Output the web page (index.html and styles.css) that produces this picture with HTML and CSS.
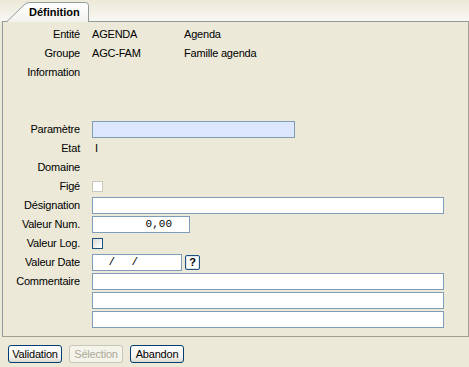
FILE: index.html
```html
<!DOCTYPE html>
<html lang="fr">
<head>
  <meta charset="UTF-8">
  <title>Définition</title>
  <link rel="stylesheet" href="styles.css">
</head>
<body>
  <div class="tabs">
    <div class="tab">
      <svg class="tab-shape" width="82" height="21" viewBox="0 0 82 21">
        <defs>
          <linearGradient id="tabfill" x1="0" y1="0" x2="0" y2="1">
            <stop offset="0" stop-color="#ffffff"/>
            <stop offset="1" stop-color="#f3f2ec"/>
          </linearGradient>
        </defs>
        <path d="M0,21 L0.5,20.5 L17,4 Q19.5,1.5 23,1.5 L78.5,1.5 Q81.5,1.5 81.5,4.5 L81.5,21 Z" fill="url(#tabfill)" stroke="none"/>
        <path d="M0,20.5 L17,4 Q19.5,1.5 23,1.5 L78.5,1.5 Q81.5,1.5 81.5,4.5 L81.5,21" fill="none" stroke="#919b9c"/>
      </svg>
      <span class="tab-label">Définition</span>
    </div>
  </div>

  <div class="panel">
    <div class="form">
      <div class="lbl">Entité</div>
      <div class="val"><span class="code">AGENDA</span><span>Agenda</span></div>

      <div class="lbl">Groupe</div>
      <div class="val"><span class="code">AGC-FAM</span><span>Famille agenda</span></div>

      <div class="lbl">Information</div>
      <div class="val"></div>

      <div class="blank"></div>

      <div class="lbl">Paramètre</div>
      <div class="val"><div class="field field-focus w-param"></div></div>

      <div class="lbl">Etat</div>
      <div class="val"><span class="etat">I</span></div>

      <div class="lbl">Domaine</div>
      <div class="val"></div>

      <div class="lbl">Figé</div>
      <div class="val"><span class="check check-off"></span></div>

      <div class="lbl">Désignation</div>
      <div class="val"><div class="field w-full"></div></div>

      <div class="lbl">Valeur Num.</div>
      <div class="val"><div class="field w-num mono num">0,00</div></div>

      <div class="lbl">Valeur Log.</div>
      <div class="val"><span class="check"></span></div>

      <div class="lbl">Valeur Date</div>
      <div class="val"><div class="field w-date mono date">  /  /</div><span class="help">?</span></div>

      <div class="lbl">Commentaire</div>
      <div class="val"><div class="field w-full"></div></div>
      <div class="lbl"></div>
      <div class="val"><div class="field w-full"></div></div>
      <div class="lbl"></div>
      <div class="val"><div class="field w-full"></div></div>
    </div>
  </div>

  <div class="actions">
    <button class="btn">Validation</button>
    <button class="btn" disabled>Sélection</button>
    <button class="btn">Abandon</button>
  </div>
</body>
</html>
```

FILE: styles.css
```css
body {
  margin: 0;
  background-color: #ece9d8;
  font-family: "Liberation Sans", Arial, sans-serif;
  font-size: 11px;
  letter-spacing: -0.2px;
  color: #000;
}
.tabs {
  height: 21px;
  background: linear-gradient(#ece9d8, #f8f7f2);
  display: flex;
  align-items: flex-end;
}
.tab {
  position: relative;
  z-index: 1;
  width: 82px;
  height: 21px;
  margin-left: 7px;
  margin-bottom: -1px;
  box-sizing: border-box;
  padding-left: 22px;
  padding-top: 2px;
  line-height: 19px;
}
.tab-shape {
  position: absolute;
  left: 0;
  top: 0;
}
.tab-label {
  position: relative;
  font-weight: bold;
  letter-spacing: 0;
}
.panel {
  margin-left: 2px;
  width: 467px;
  box-sizing: border-box;
  border: 1px solid #919b9c;
  border-right-color: #a19f93;
  border-bottom-color: #a19f93;
  padding: 4px 0 6px 0;
}
.form {
  display: grid;
  grid-template-columns: 77px 1fr;
  column-gap: 12px;
  grid-auto-rows: 19px;
}
.lbl {
  text-align: right;
  line-height: 17px;
  white-space: nowrap;
}
.val {
  display: flex;
  align-items: flex-start;
  line-height: 17px;
}
.code {
  width: 92px;
}
.blank {
  grid-column: 1 / -1;
  grid-row: span 2;
}
.etat {
  padding-left: 3px;
}
.field {
  height: 17px;
  box-sizing: border-box;
  border: 1px solid #7f9db9;
  background-color: #fff;
}
.field-focus {
  background-color: #dce6ff;
}
.w-param {
  width: 203px;
}
.w-full {
  width: 352px;
}
.w-num {
  width: 98px;
}
.w-date {
  width: 90px;
}
.mono {
  font-family: "Liberation Mono", "Courier New", monospace;
  font-size: 11px;
  letter-spacing: 0;
  line-height: 15px;
  white-space: pre;
}
.num {
  text-align: right;
  padding-right: 17px;
}
.date {
  padding-left: 0;
  letter-spacing: 1.1px;
}
.check {
  width: 11px;
  height: 11px;
  box-sizing: border-box;
  margin-top: 3px;
  border: 1px solid #1c5180;
  background: linear-gradient(135deg, #dcdcd7, #ffffff);
}
.check-off {
  border-color: #cac8bb;
  background: #fff;
}
.help {
  width: 15px;
  height: 15px;
  box-sizing: border-box;
  margin-left: 3px;
  margin-top: 1px;
  border: 1px solid #1c5180;
  border-radius: 2px;
  background-color: #fff;
  box-shadow: inset 0 0 0 1px #dfe6ee;
  font-weight: bold;
  font-size: 11px;
  line-height: 13px;
  text-align: center;
  letter-spacing: 0;
}
.actions {
  display: flex;
  gap: 7px;
  padding: 8px 0 0 8px;
}
.btn {
  width: 54px;
  height: 18px;
  padding: 0;
  font-family: "Liberation Sans", Arial, sans-serif;
  font-size: 11px;
  letter-spacing: -0.2px;
  color: #000;
  border: 1px solid #003c74;
  border-radius: 3px;
  background: linear-gradient(#ffffff, #f4f3ee 70%, #dcd8cc);
}
.btn:disabled {
  color: #aca899;
  border-color: #c9c7ba;
  background: #f5f4ea;
}
```
